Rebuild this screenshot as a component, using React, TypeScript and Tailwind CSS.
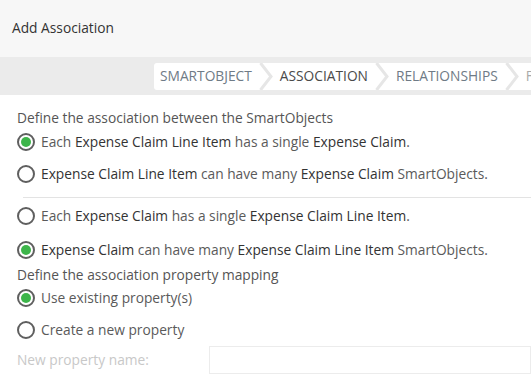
import { type ReactNode } from 'react';

const font = { fontFamily: '"Open Sans", "Liberation Sans", sans-serif' };

const Radio = ({ checked, className, children }: { checked?: boolean; className?: string; children: ReactNode }) => (
  <label className={`flex items-center gap-[6px] h-[30px] ${className ?? ''}`}>
    <span className="w-[18px] h-[18px] rounded-full border-2 border-[#5f5f5f] grid place-items-center bg-white shrink-0">
      {checked && <span className="w-[10px] h-[10px] rounded-full bg-[#3db54a]" />}
    </span>
    <span className="text-[13.75px] text-[#5a5a5a] whitespace-nowrap">{children}</span>
  </label>
);

const B = ({ children }: { children: ReactNode }) => (
  <span className="font-medium text-[#333]">{children}</span>
);

const Chevron = () => (
  <svg width="14" height="27" viewBox="0 0 14 27" className="shrink-0">
    <path d="M1.5 0 L12 13.5 L1.5 27" fill="none" stroke="#e6e6e6" strokeWidth="3" />
  </svg>
);

const steps = [
  { text: 'SMARTOBJECT', active: false },
  { text: 'ASSOCIATION', active: true },
  { text: 'RELATIONSHIPS', active: false },
  { text: 'FIELDS', active: false },
];

export default function App() {
  return (
    <div className="w-[531px] h-[378px] overflow-hidden bg-white" style={font}>
      <header className="h-[57px] bg-[#f7f7f7] flex items-center px-[12px]">
        <h1 className="text-[13.75px] text-[#333]">Add Association</h1>
      </header>
      <div className="h-[38px] bg-[#ebebeb] flex items-center pl-[154px] overflow-hidden">
        <nav className="h-[27px] bg-white rounded-l-[3px] flex items-center pl-[6px] gap-[7px] whitespace-nowrap flex-1">
          {steps.map((s, idx) => (
            <div key={idx} className="flex items-center gap-[7px]">
              <span
                className={
                  s.active
                    ? 'text-[13.75px] font-medium text-[#4a4a4a]'
                    : idx === 3
                      ? 'text-[13.75px] text-[#aaa]'
                      : 'text-[13.75px] text-[#6f7b86]'
                }>
                {s.text}
              </span>
              {idx < 3 && <Chevron />}
            </div>
          ))}
        </nav>
      </div>
      <main className="pl-[17px] pt-[14px]">
        <p className="text-[13.75px] text-[#555] leading-[18px]">Define the association between the SmartObjects</p>
        <Radio checked>
          Each <B>Expense Claim Line Item</B> has a single <B>Expense Claim</B>.
        </Radio>
        <Radio className="mt-[2px]">
          <B>Expense Claim Line Item</B> can have many <B>Expense Claim</B> SmartObjects.
        </Radio>
        <div className="border-t border-[#e3e3e3] ml-[6px] mt-[8px]" />
        <Radio className="mt-[3px]">
          Each <B>Expense Claim</B> has a single <B>Expense Claim Line Item</B>.
        </Radio>
        <Radio checked className="mt-[4px]">
          <B>Expense Claim</B> can have many <B>Expense Claim Line Item</B> SmartObjects.
        </Radio>
        <p className="text-[13.75px] text-[#555] leading-[18px] mt-[1px]">Define the association property mapping</p>
        <Radio checked className="-mt-[1px]">
          Use existing property(s)
        </Radio>
        <Radio className="mt-[2px]">Create a new property</Radio>
        <div className="flex items-center mt-[1px]">
          <span className="w-[192px] text-[13.75px] text-[#c8c8c8]">New property name:</span>
          <input className="flex-1 h-[28px] border border-[#ececec] outline-none" />
        </div>
      </main>
    </div>
  );
}
